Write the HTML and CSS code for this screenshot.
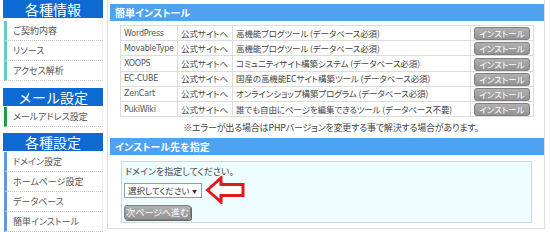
FILE: index.html
```html
<!DOCTYPE html>
<html lang="ja">
<head>
<meta charset="utf-8">
<title>簡単インストール</title>
<link rel="stylesheet" href="styles.css">
</head>
<body>
<div class="page">
  <nav class="sidebar">
    <div class="group g-info">
      <div class="group-title">各種情報</div>
      <div class="item">ご契約内容</div>
      <div class="item">リソース</div>
      <div class="item">アクセス解析</div>
    </div>
    <div class="group g-mail">
      <div class="group-title">メール設定</div>
      <div class="item">メールアドレス設定</div>
    </div>
    <div class="group g-set">
      <div class="group-title">各種設定</div>
      <div class="item">ドメイン設定</div>
      <div class="item">ホームページ設定</div>
      <div class="item">データベース</div>
      <div class="item">簡単インストール</div>
    </div>
  </nav>
  <main class="panel">
    <h2 class="bar">簡単インストール</h2>
    <table class="apps">
      <colgroup><col class="c-name"><col class="c-site"><col class="c-desc"><col class="c-act"></colgroup>
      <tr><td class="name">WordPress</td><td>公式サイトへ</td><td>高機能ブログツール (データベース必須)</td><td class="act"><span class="btn">インストール</span></td></tr>
      <tr><td class="name">MovableType</td><td>公式サイトへ</td><td>高機能ブログツール (データベース必須)</td><td class="act"><span class="btn">インストール</span></td></tr>
      <tr><td class="name">XOOPS</td><td>公式サイトへ</td><td>コミュニティサイト構築システム (データベース必須)</td><td class="act"><span class="btn">インストール</span></td></tr>
      <tr><td class="name">EC-CUBE</td><td>公式サイトへ</td><td>国産の高機能ECサイト構築ツール (データベース必須)</td><td class="act"><span class="btn">インストール</span></td></tr>
      <tr><td class="name">ZenCart</td><td>公式サイトへ</td><td>オンラインショップ構築プログラム (データベース必須)</td><td class="act"><span class="btn">インストール</span></td></tr>
      <tr><td class="name">PukiWiki</td><td>公式サイトへ</td><td>誰でも自由にページを編集できるツール (データベース不要)</td><td class="act"><span class="btn">インストール</span></td></tr>
    </table>
    <p class="note">※エラーが出る場合はPHPバージョンを変更する事で解決する場合があります。</p>
    <h2 class="bar">インストール先を指定</h2>
    <div class="target">
      <p class="prompt">ドメインを指定してください。</p>
      <div class="pick">
        <div class="select"><span>選択してください</span><span class="caret">▼</span></div>
        <svg class="arrow" width="40" height="28" viewBox="0 0 40 28" aria-hidden="true">
          <path d="M2.5 14 L16 2 L16 8.5 L38 8.5 L38 19.5 L16 19.5 L16 26 Z" fill="#fff" stroke="#de1b1b" stroke-width="3" stroke-linejoin="miter"/>
        </svg>
      </div>
      <span class="btn next">次ページへ進む</span>
    </div>
  </main>
</div>
</body>
</html>
```

FILE: styles.css
```css
* { box-sizing: border-box; }
html, body { margin: 0; padding: 0; background: #fff; }
body {
  font-family: "Noto Sans CJK JP", "Liberation Sans", sans-serif;
  font-feature-settings: "palt";
  color: #444;
  font-size: 9px;
  width: 550px;
  height: 232px;
  overflow: hidden;
}
.page { display: flex; align-items: flex-start; }

/* sidebar */
.sidebar { width: 100px; margin-left: 3px; display: flex; flex-direction: column; }
.group-title {
  background: #0d6ad2;
  color: #fff;
  height: 18px;
  line-height: 18px;
  font-size: 14px;
  text-align: center;
  margin-bottom: 1px;
  font-feature-settings: normal;
}
.g-info { margin-bottom: 7px; }
.g-info .group-title { margin-bottom: 3px; }
.g-mail { margin-bottom: 6px; }
.item {
  height: 20px;
  line-height: 19px;
  margin-left: 1px;
  padding-left: 6px;
  border-left: 3px solid #5ecaca;
  border-right: 1px solid #eee;
  border-bottom: 1px dotted #c8c8c8;
  color: #555;
  font-size: 9px;
  white-space: nowrap;
}
.g-mail .item { border-left-color: #1f9e43; }
.g-set .item { border-left-color: #6497dc; }

/* main panel */
.panel {
  margin-left: 4px;
  width: 438px;
  height: 229px;
  border: 1px solid #dedede;
  border-top: none;
  padding: 4px 0 0 2px;
}
.bar {
  margin: 0;
  height: 17px;
  line-height: 17px;
  background: #4fa2ef;
  color: #fff;
  font-size: 10px;
  font-weight: bold;
  padding-left: 5px;
}
.apps {
  border-collapse: collapse;
  table-layout: fixed;
  margin: 4px 0 0 10px;
  width: 413px;
  border: 1px solid #cfcfcf;
}
.c-name { width: 57px; }
.c-site { width: 55px; }
.c-desc { width: 238px; }
.c-act { width: 63px; }
.apps td {
  border: 1px solid #dcdcdc;
  height: 15px;
  padding: 0 3px;
  line-height: 13px;
  white-space: nowrap;
  overflow: hidden;
  color: #444;
  font-size: 8.5px;
  letter-spacing: -0.1px;
}
.apps .name { font-family: "DejaVu Sans", sans-serif; font-size: 8px; letter-spacing: -0.2px; color: #555; }
.apps .act { text-align: center; padding: 0 2px; letter-spacing: 0; }
.btn {
  display: inline-block;
  color: #fff;
  background: linear-gradient(#b0b0b0, #939393);
  border: 1px solid #808080;
  border-radius: 3px;
  height: 13px;
  line-height: 11px;
  font-size: 9px;
  text-align: center;
  vertical-align: middle;
  white-space: nowrap;
}
.apps .btn { width: 56px; font-size: 8.5px; }
.note {
  margin: 0;
  height: 21px;
  line-height: 21px;
  text-align: center;
  padding-left: 8px;
  color: #444;
  letter-spacing: -0.2px;
}

/* target */
.target {
  margin: 6px 12px 0 11px;
  height: 62px;
  border: 1px solid #cfd8dc;
  background: #eefdff;
  padding: 3px 2px;
}
.prompt { margin: 0; height: 14px; line-height: 14px; padding-left: 1px; }
.pick { display: flex; align-items: center; gap: 3px; height: 22px; }
.select {
  display: flex;
  align-items: center;
  justify-content: space-between;
  flex-shrink: 0;
  white-space: nowrap;
  width: 78px;
  height: 15px;
  border: 1px solid #9a9a9a;
  background: #fff;
  padding: 0 4px 0 3px;
  color: #333;
  font-size: 8.5px;
}
.caret { font-size: 5px; color: #333; }
.arrow { display: block; flex-shrink: 0; }
.next { width: 67px; height: 15px; line-height: 13px; margin-top: 4px; font-size: 9px; box-shadow: 1px 1px 0 #666; }
```
